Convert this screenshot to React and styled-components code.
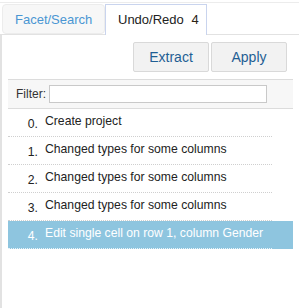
import React from 'react';
import styled, { createGlobalStyle } from 'styled-components';

const GlobalStyle = createGlobalStyle`
  body {
    margin: 0;
    background: #fff;
    font-family: 'Liberation Sans', Arial, sans-serif;
  }
`;

const entries = [
  'Create project',
  'Changed types for some columns',
  'Changed types for some columns',
  'Changed types for some columns',
  'Edit single cell on row 1, column Gender',
];

const current = 4;

class App extends React.Component {
  render() {
    return (
      <Page>
        <GlobalStyle />
        <TabBar>
          <Tab width={103}>Facet/Search</Tab>
          <Tab width={102} active>
            Undo/Redo <Count>4</Count>
          </Tab>
        </TabBar>
        <Panel>
          <Toolbar>
            <Button>Extract</Button>
            <Button>Apply</Button>
          </Toolbar>
          <FilterBar>
            <Label>Filter:</Label>
            <FilterInput type="text" />
          </FilterBar>
          <History>
            {entries.map((text, i) => (
              <Entry key={i} now={i === current}>
                <EntryInner now={i === current}>
                  <Index>{i}.</Index>
                  <Description>{text}</Description>
                </EntryInner>
              </Entry>
            ))}
          </History>
        </Panel>
      </Page>
    );
  }
}

export default App;

/* Style */
const Page = styled.div`
  width: 299px;
  height: 308px;
  display: flex;
  flex-direction: column;
  background: #fff;
  overflow: hidden;
`;

const TabBar = styled.div`
  display: flex;
  align-items: flex-end;
  height: 31px;
  margin-top: 2px;
  padding-left: 2px;
  border-top: 1px solid #ececec;
  border-bottom: 1px solid #e2e2e2;
`;

const Tab = styled.div`
  box-sizing: border-box;
  width: ${(p) => p.width}px;
  height: ${(p) => (p.active ? 31 : 30)}px;
  margin-bottom: ${(p) => (p.active ? -1 : 0)}px;
  padding: 0 12px;
  line-height: 30px;
  font-size: 13px;
  white-space: nowrap;
  color: ${(p) => (p.active ? '#222' : '#4a96d3')};
  background: ${(p) => (p.active ? '#fff' : '#f7f7f7')};
  border: 1px solid ${(p) => (p.active ? '#c9d4ee' : '#ececec')};
  border-bottom: ${(p) => (p.active ? 'none' : '1px solid #ececec')};
  border-radius: ${(p) => (p.active ? '0' : '4px')};
`;

const Count = styled.span`
  margin-left: 4px;
  color: #2a2216;
`;

const Panel = styled.div`
  flex: 1;
  border-left: 2px solid #e2e2e2;
  padding: 0 6px;
`;

const Toolbar = styled.div`
  display: flex;
  justify-content: flex-end;
  gap: 2px;
  padding: 7px 6px 0 0;
  margin-bottom: 7px;
`;

const Button = styled.button`
  box-sizing: border-box;
  width: 76px;
  height: 30px;
  padding: 0;
  font-family: 'Liberation Sans', Arial, sans-serif;
  font-size: 14px;
  color: #1f5f94;
  background: #f2f2f2;
  border: 1px solid #d9d9d9;
  border-radius: 2px;
  cursor: pointer;
`;

const FilterBar = styled.div`
  display: flex;
  align-items: center;
  height: 28px;
  padding-left: 8px;
  background: #f7f7f7;
  border-top: 1px solid #dcdcdc;
  border-bottom: 1px solid #dcdcdc;
`;

const Label = styled.span`
  font-size: 12px;
  color: #333;
`;

const FilterInput = styled.input`
  box-sizing: border-box;
  width: 218px;
  height: 18px;
  margin: 0 0 0 3px;
  padding: 0 2px;
  background: #fff;
  border: 1px solid #c9c9c9;
  outline: none;
`;

const History = styled.div`
  display: flex;
  flex-direction: column;
`;

const Entry = styled.div`
  background: ${(p) => (p.now ? '#8ec5df' : 'transparent')};
  color: ${(p) => (p.now ? '#fff' : '#222')};
`;

const EntryInner = styled.div`
  box-sizing: border-box;
  display: flex;
  align-items: flex-start;
  width: 264px;
  height: 28px;
  border-bottom: 1px dotted ${(p) => (p.now ? '#e6f3f9' : '#cfcfcf')};
`;

const Index = styled.span`
  width: 30px;
  margin-right: 7px;
  padding-top: 8px;
  text-align: right;
  font-size: 12.2px;
  line-height: 15px;
`;

const Description = styled.span`
  padding-top: 5px;
  font-size: 12.2px;
  line-height: 15px;
  white-space: nowrap;
`;
